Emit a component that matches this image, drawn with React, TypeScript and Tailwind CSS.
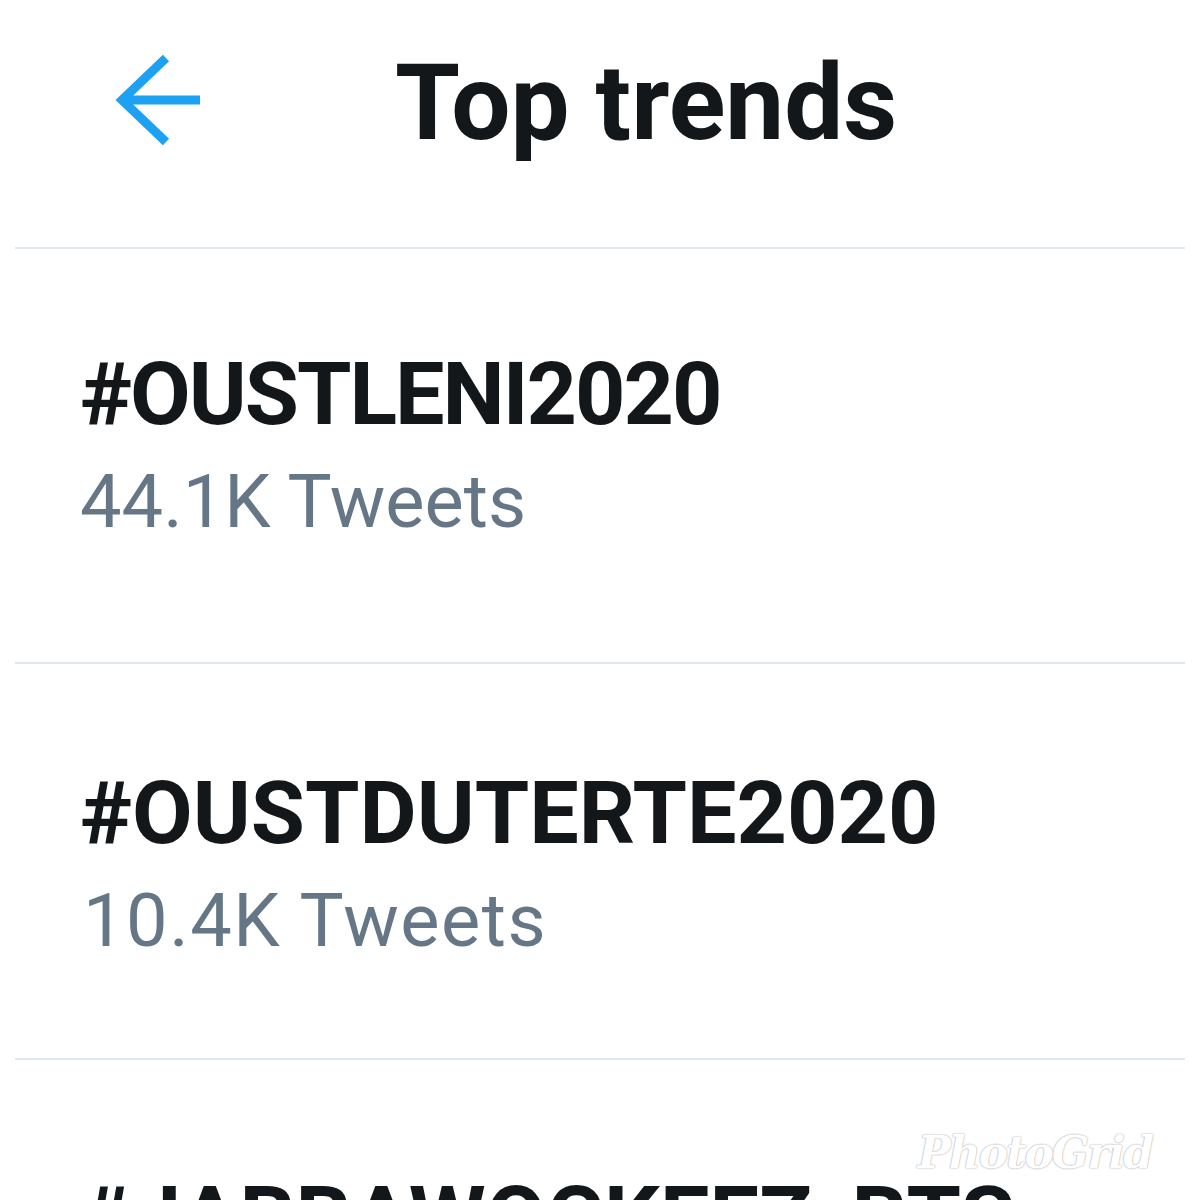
import React from "react";

const trends = [
  {
    tag: "#OUSTLENI2020",
    count: "44.1K Tweets",
    pad: "pt-[101px] pb-[123px]",
    tagCls: "tracking-[-2px]",
    countCls: "",
  },
  {
    tag: "#OUSTDUTERTE2020",
    count: "10.4K Tweets",
    pad: "pt-[105px] pb-[100px]",
    tagCls: "",
    countCls: "tracking-[1.5px] pl-[3px]",
  },
];

function BackArrow() {
  return (
    <svg width="100" height="100" viewBox="0 0 100 100" fill="none">
      <path
        d="M66 8 L22 50 L66 92 M22 50 L105 50"
        stroke="#1da1f2"
        strokeWidth="9"
        strokeLinecap="butt"
        strokeLinejoin="miter"
      />
    </svg>
  );
}

export default function App() {
  return (
    <div className="relative w-[1200px] h-[1200px] overflow-hidden bg-white font-['Roboto',sans-serif] text-[#14171a]">
      {/* Header */}
      <header className="flex items-start h-[249px] mx-[15px] border-b-2 border-[#e1e8ed]">
        <div className="mt-[50px] ml-[85px] w-[295px]">
          <BackArrow />
        </div>
        <h1 className="mt-[51px] text-[105px] leading-none font-bold">Top trends</h1>
      </header>

      {/* Trend list */}
      <ul>
        {trends.map((t) => (
          <li key={t.tag} className={`mx-[15px] pl-[65px] border-b-2 border-[#e1e8ed] ${t.pad}`}>
            <div className={`text-[88px] leading-none font-bold ${t.tagCls}`}>{t.tag}</div>
            <div className={`mt-[27px] text-[74px] leading-none text-[#657786] ${t.countCls}`}>{t.count}</div>
          </li>
        ))}
        <li className="mx-[15px] pl-[65px] pt-[114px]">
          <div className="text-[88px] leading-none font-bold">#JABBAWOCKEEZ_BTS</div>
        </li>
      </ul>

      {/* Watermark */}
      <div className="absolute right-[48px] bottom-[14px] text-[44px] italic font-bold font-['DejaVu_Serif',serif] text-white tracking-[-2px] [text-shadow:0_0_2px_#bbb,0_0_1px_#999]">
        PhotoGrid
      </div>
    </div>
  );
}
